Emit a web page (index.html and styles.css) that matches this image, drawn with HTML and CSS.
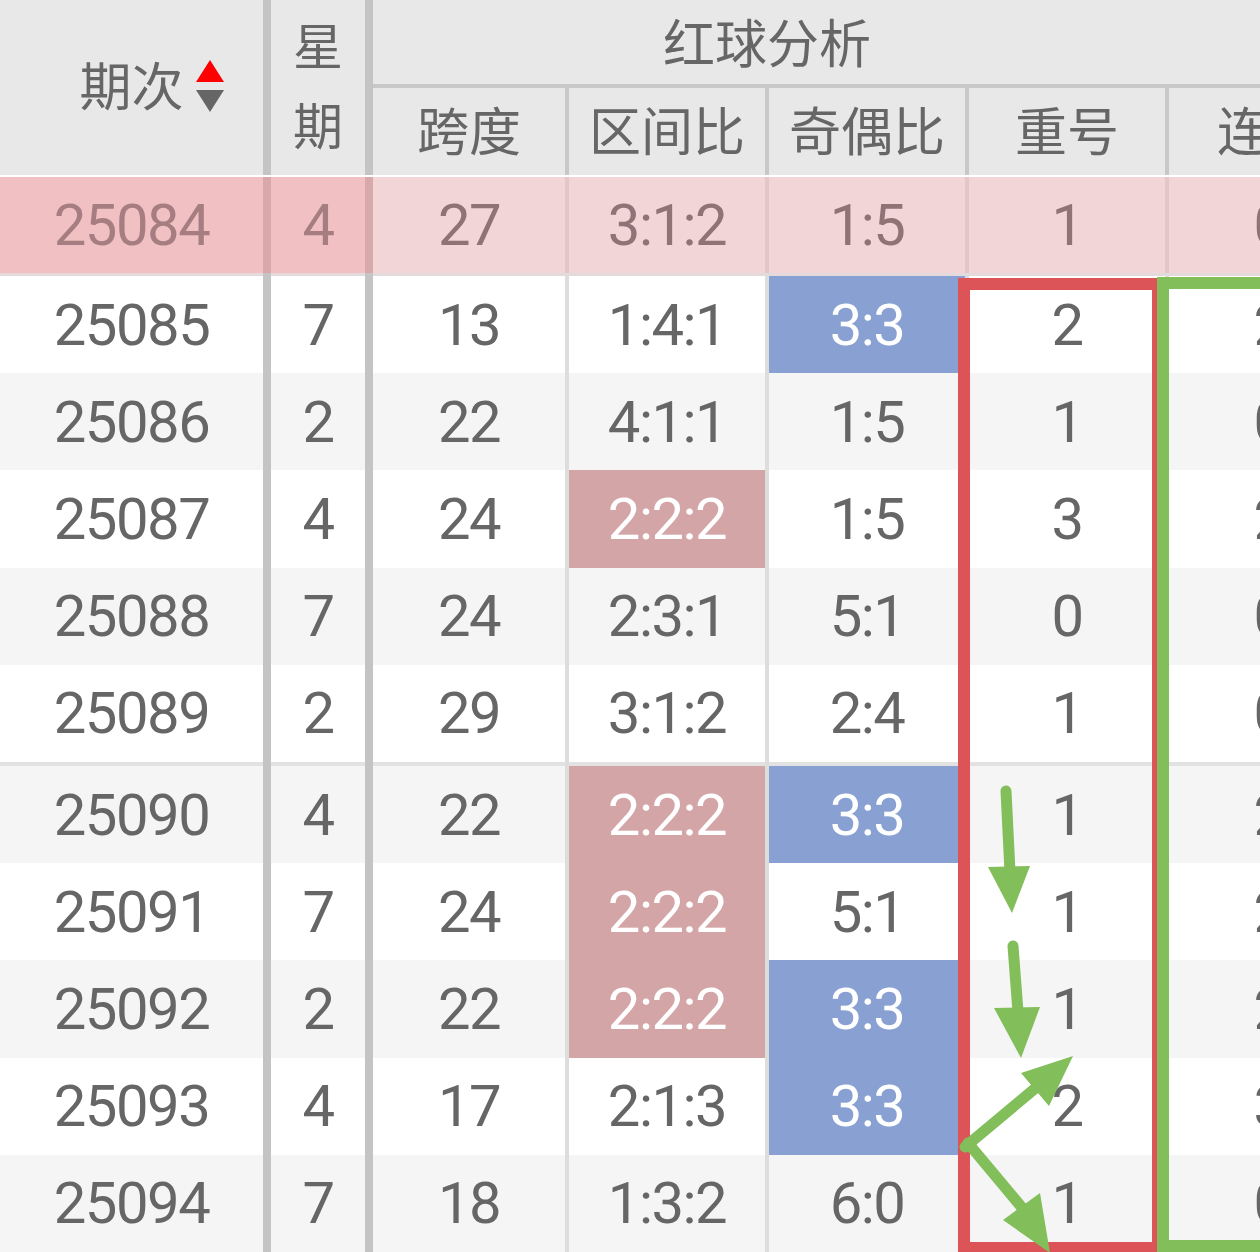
FILE: index.html
```html
<!DOCTYPE html>
<html lang="zh-CN">
<head>
<meta charset="utf-8">
<title>红球分析</title>
<link rel="stylesheet" href="styles.css">
</head>
<body>
<div class="page">
  <div class="table">
    <div class="thead">
      <div class="h h-id">
        <span class="h-label">期次</span>
        <svg class="sort" width="28" height="52" viewBox="0 0 28 52"><polygon points="14,0 28,22 0,22" fill="#ff0000"/><polygon points="0,30 28,30 14,52" fill="#666666"/></svg>
      </div>
      <div class="h h-wk">星<br>期</div>
      <div class="h h-group">红球分析</div>
      <div class="h h-sub">跨度</div>
      <div class="h h-sub">区间比</div>
      <div class="h h-sub">奇偶比</div>
      <div class="h h-sub">重号</div>
      <div class="h h-sub h-last">连号</div>
    </div>

    <div class="row row-cur">
      <div class="c c-id">25084</div><div class="c c-wk">4</div><div class="c">27</div><div class="c">3:1:2</div><div class="c">1:5</div><div class="c">1</div><div class="c c-last">0</div>
    </div>
    <div class="sep sep-cur"><div class="c c-id"></div><div class="c c-wk"></div><div class="c"></div><div class="c"></div><div class="c"></div><div class="c"></div><div class="c c-last"></div></div>

    <div class="row">
      <div class="c c-id">25085</div><div class="c c-wk">7</div><div class="c">13</div><div class="c">1:4:1</div><div class="c hl-blue">3:3</div><div class="c">2</div><div class="c c-last">2</div>
    </div>
    <div class="row alt">
      <div class="c c-id">25086</div><div class="c c-wk">2</div><div class="c">22</div><div class="c">4:1:1</div><div class="c">1:5</div><div class="c">1</div><div class="c c-last">0</div>
    </div>
    <div class="row">
      <div class="c c-id">25087</div><div class="c c-wk">4</div><div class="c">24</div><div class="c hl-pink">2:2:2</div><div class="c">1:5</div><div class="c">3</div><div class="c c-last">2</div>
    </div>
    <div class="row alt">
      <div class="c c-id">25088</div><div class="c c-wk">7</div><div class="c">24</div><div class="c">2:3:1</div><div class="c">5:1</div><div class="c">0</div><div class="c c-last">0</div>
    </div>
    <div class="row">
      <div class="c c-id">25089</div><div class="c c-wk">2</div><div class="c">29</div><div class="c">3:1:2</div><div class="c">2:4</div><div class="c">1</div><div class="c c-last">0</div>
    </div>
    <div class="sep"><div class="c c-id"></div><div class="c c-wk"></div><div class="c"></div><div class="c"></div><div class="c"></div><div class="c"></div><div class="c c-last"></div></div>
    <div class="row alt">
      <div class="c c-id">25090</div><div class="c c-wk">4</div><div class="c">22</div><div class="c hl-pink">2:2:2</div><div class="c hl-blue">3:3</div><div class="c">1</div><div class="c c-last">2</div>
    </div>
    <div class="row">
      <div class="c c-id">25091</div><div class="c c-wk">7</div><div class="c">24</div><div class="c hl-pink">2:2:2</div><div class="c">5:1</div><div class="c">1</div><div class="c c-last">2</div>
    </div>
    <div class="row alt">
      <div class="c c-id">25092</div><div class="c c-wk">2</div><div class="c">22</div><div class="c hl-pink">2:2:2</div><div class="c hl-blue">3:3</div><div class="c">1</div><div class="c c-last">2</div>
    </div>
    <div class="row">
      <div class="c c-id">25093</div><div class="c c-wk">4</div><div class="c">17</div><div class="c">2:1:3</div><div class="c hl-blue">3:3</div><div class="c">2</div><div class="c c-last">3</div>
    </div>
    <div class="row alt">
      <div class="c c-id">25094</div><div class="c c-wk">7</div><div class="c">18</div><div class="c">1:3:2</div><div class="c">6:0</div><div class="c">1</div><div class="c c-last">0</div>
    </div>
  </div>

  <svg class="marks" width="1260" height="1252" viewBox="0 0 1260 1252">
    <rect x="964" y="284" width="194" height="964" fill="none" stroke="#dc5358" stroke-width="12"/>
    <rect x="1163" y="283" width="200" height="963" fill="none" stroke="#82be5a" stroke-width="12"/>
    <g stroke="#82be5a" stroke-width="11" stroke-linecap="round" fill="none">
      <line x1="1006" y1="791" x2="1010" y2="872"/>
      <line x1="1013" y1="946" x2="1018" y2="1012"/>
      <line x1="965" y1="1147" x2="1038" y2="1086"/>
      <line x1="968" y1="1143" x2="1024" y2="1210"/>
    </g>
    <g fill="#82be5a">
      <polygon points="988,867 1030,866 1012,913"/>
      <polygon points="994,1008 1040,1007 1021,1058"/>
      <polygon points="1021,1073 1073,1056 1049,1106"/>
      <polygon points="1003,1220 1040,1193 1050,1253"/>
    </g>
  </svg>
</div>
</body>
</html>
```

FILE: styles.css
```css
* { box-sizing: border-box; }

html, body {
  margin: 0;
  padding: 0;
  background: #ffffff;
}

body {
  width: 1260px;
  height: 1252px;
  overflow: hidden;
  font-family: Roboto, "Noto Sans CJK SC", sans-serif;
  color: #666666;
}

.page {
  position: relative;
  width: 1260px;
  height: 1252px;
  overflow: hidden;
}

.table {
  width: 1369px;
}

/* header */
.thead {
  display: grid;
  grid-template-columns: 271px 102px 196px 200px 200px 200px 200px;
  grid-template-rows: 88px 87px;
  background: #e8e8e8;
  border-bottom: 2px solid #ffffff;
  font-family: "Noto Sans CJK SC", sans-serif;
  font-size: 52px;
  color: #666666;
}

.h {
  display: flex;
  align-items: center;
  justify-content: center;
}

.h-id {
  grid-column: 1;
  grid-row: 1 / 3;
  border-right: 8px solid #c4c4c4;
  padding-left: 40px;
  padding-bottom: 4px;
}

.h-label {
  line-height: 1;
  padding-bottom: 4px;
}

.sort {
  margin-left: 12px;
  flex: none;
}

.h-wk {
  grid-column: 2;
  grid-row: 1 / 3;
  border-right: 8px solid #c4c4c4;
  text-align: center;
  line-height: 80px;
  font-size: 50px;
  padding-bottom: 10px;
}

.h-group {
  grid-column: 3 / 8;
  grid-row: 1;
  justify-content: flex-start;
  padding-left: 290px;
  padding-bottom: 4px;
  border-bottom: 4px solid #c8c8c8;
}

.h-sub {
  grid-row: 2;
  border-right: 4px solid #c8c8c8;
  padding-bottom: 6px;
}

.h-last {
  border-right: 0;
}

/* body rows */
.row, .sep {
  display: grid;
  grid-template-columns: 271px 102px 196px 200px 200px 200px 200px;
}

.row {
  height: 97.2px;
  background: #ffffff;
}

.row.alt {
  background: #f5f5f5;
}

.c {
  display: flex;
  align-items: center;
  justify-content: center;
  border-right: 4px solid #dddddd;
  background-clip: padding-box;
  font-size: 58px;
  letter-spacing: -1.5px;
  color: #666666;
}

.c-id, .c-wk {
  border-right: 8px solid #c4c4c4;
}

.c-last {
  border-right: 0;
}

.hl-pink {
  background-color: #d4a5a6;
  color: #ffffff;
}

.hl-blue {
  background-color: #88a0d2;
  color: #ffffff;
}

/* current (highlighted) row */
.row-cur {
  height: 96px;
  background: #f2d5d7;
}

.row-cur .c {
  color: #8f7375;
  border-right-color: #e2c6c8;
}

.row-cur .c-id,
.row-cur .c-wk {
  background-color: #f0c0c2;
  color: #a67e81;
  border-right-color: #d8a9ab;
}

.row-cur .c-last {
  border-right: 0;
}

/* separators */
.sep {
  height: 4px;
  background: #e2e2e2;
}

.sep .c {
  background: #e2e2e2;
  background-clip: padding-box;
}

.sep .c-id, .sep .c-wk {
  border-right-color: #c4c4c4;
}

.sep-cur {
  height: 3px;
  background: #e4dadb;
}

.sep-cur .c {
  background: #e4dadb;
  background-clip: padding-box;
}

/* overlay marks */
.marks {
  position: absolute;
  top: 0;
  left: 0;
  pointer-events: none;
}
```
